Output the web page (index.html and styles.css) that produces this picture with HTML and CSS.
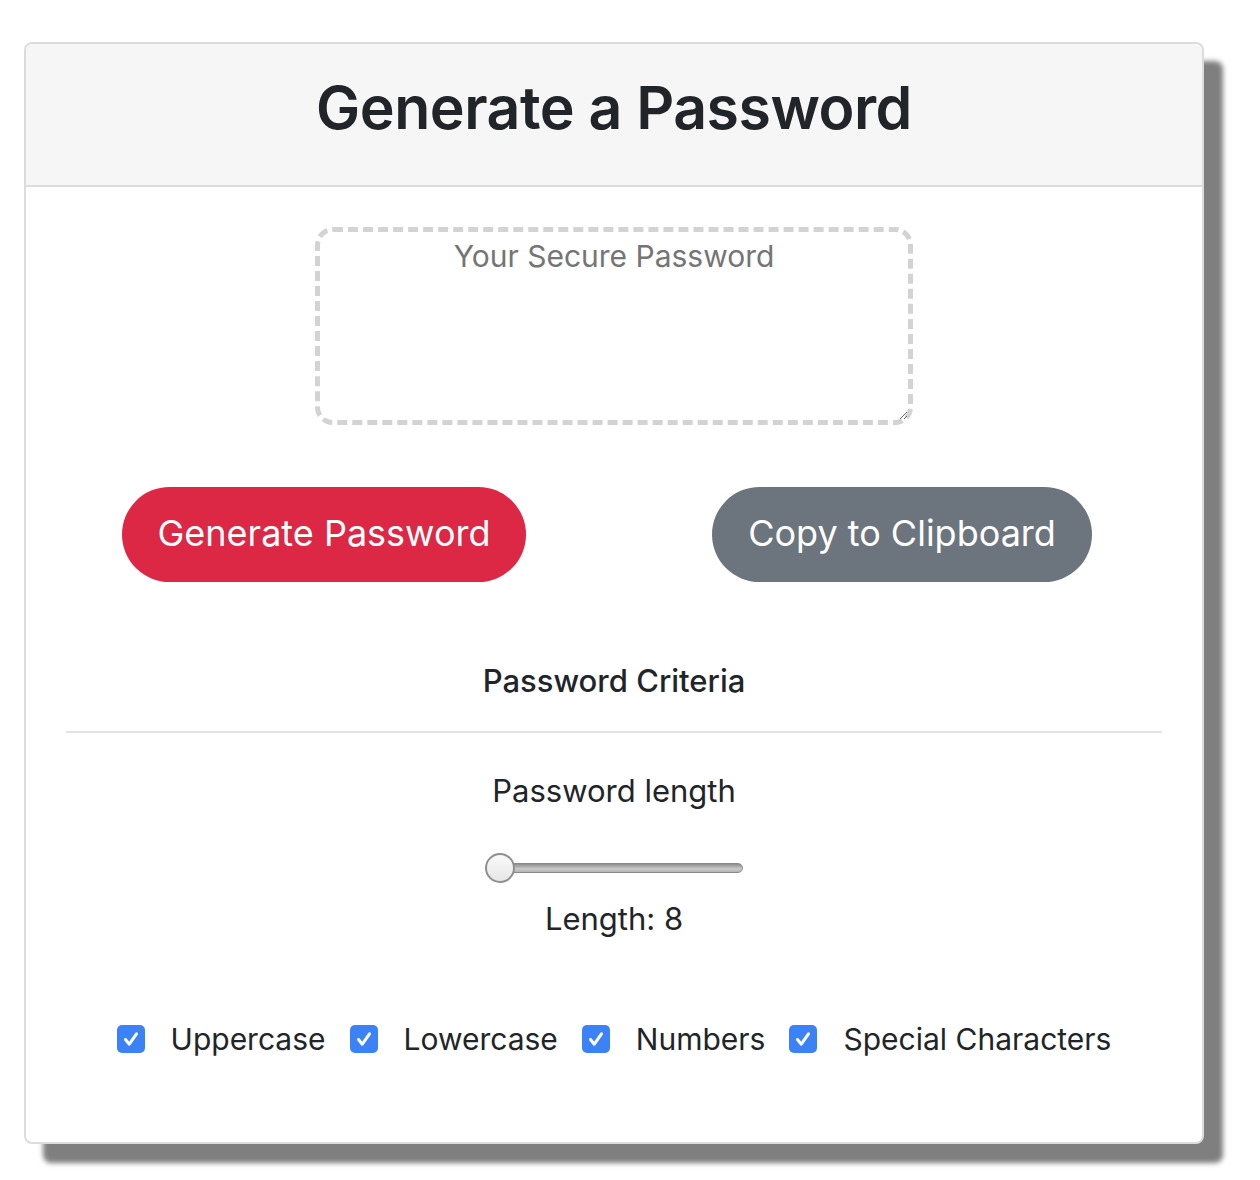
FILE: index.html
```html
<!DOCTYPE html>
<html lang="en">
<head>
<meta charset="utf-8">
<title>Password Generator</title>
<link rel="stylesheet" href="styles.css">
</head>
<body>
<div class="wrapper">
  <div class="card">
    <div class="card-header">
      <h2 class="title">Generate a Password</h2>
    </div>
    <div class="card-body">
      <textarea class="password" readonly placeholder="Your Secure Password" aria-label="Generated Password"></textarea>
      <div class="actions">
        <button class="btn btn-red">Generate Password</button>
        <button class="btn btn-gray">Copy to Clipboard</button>
      </div>
      <h3 class="criteria">Password Criteria</h3>
      <hr class="divider">
      <p class="label">Password length</p>
      <div class="slider">
        <div class="track"></div>
        <div class="thumb"></div>
      </div>
      <p class="length">Length: 8</p>
      <div class="checks">
        <label class="check"><span class="box"><svg viewBox="0 0 28 28" width="28" height="28"><path d="M8.5 14.5 L12.3 19.2 L19.5 8.8" fill="none" stroke="#fff" stroke-width="3" stroke-linecap="round" stroke-linejoin="round"/></svg></span>Uppercase</label>
        <label class="check"><span class="box"><svg viewBox="0 0 28 28" width="28" height="28"><path d="M8.5 14.5 L12.3 19.2 L19.5 8.8" fill="none" stroke="#fff" stroke-width="3" stroke-linecap="round" stroke-linejoin="round"/></svg></span>Lowercase</label>
        <label class="check"><span class="box"><svg viewBox="0 0 28 28" width="28" height="28"><path d="M8.5 14.5 L12.3 19.2 L19.5 8.8" fill="none" stroke="#fff" stroke-width="3" stroke-linecap="round" stroke-linejoin="round"/></svg></span>Numbers</label>
        <label class="check"><span class="box"><svg viewBox="0 0 28 28" width="28" height="28"><path d="M8.5 14.5 L12.3 19.2 L19.5 8.8" fill="none" stroke="#fff" stroke-width="3" stroke-linecap="round" stroke-linejoin="round"/></svg></span>Special Characters</label>
      </div>
    </div>
  </div>
</div>
</body>
</html>
```

FILE: styles.css
```css
* { box-sizing: border-box; }
html, body { margin: 0; padding: 0; background: #fff; }
body {
  font-family: Inter, "Noto Sans", Roboto, sans-serif;
  color: #212529;
}
.wrapper { padding: 42px 0 38px 24px; }
.card {
  width: 1180px;
  height: 1102px;
  border: 2px solid #dcdcdc;
  border-radius: 8px;
  background: #fff;
  box-shadow: 19px 19px 5px rgba(0,0,0,0.5);
  overflow: hidden;
}
.card-header {
  height: 143px;
  background: #f6f6f6;
  border-bottom: 2px solid #dcdcdc;
  display: flex;
  align-items: center;
  justify-content: center;
  padding-bottom: 14px;
}
.title {
  margin: 0;
  font-size: 59px;
  font-weight: 600;
  letter-spacing: -0.5px;
  color: #212529;
}
.card-body {
  padding: 40px 40px 0;
  display: flex;
  flex-direction: column;
  align-items: center;
}
.password {
  width: 598px;
  height: 198px;
  border: 5px dashed #d3d3d3;
  border-radius: 18px;
  resize: both;
  font-family: inherit;
  font-size: 30px;
  text-align: center;
  padding: 6px 8px;
  outline: none;
}
.password::placeholder { color: #757575; }
.actions {
  align-self: stretch;
  display: flex;
  justify-content: space-between;
  padding: 0 70px 0 56px;
  margin-top: 62px;
}
.btn {
  height: 95px;
  border: none;
  border-radius: 48px;
  color: #fff;
  font-family: inherit;
  font-size: 36px;
  font-weight: 400;
  padding: 0 0 4px;
}
.btn-red { background: #dc2745; width: 404px; }
.btn-gray { background: #6c757d; width: 380px; }
.criteria {
  margin: 79px 0 0;
  font-size: 31px;
  font-weight: 500;
  line-height: 40px;
}
.divider {
  align-self: stretch;
  border: none;
  border-top: 2px solid #e4e4e4;
  margin: 30px 0 0;
}
.label {
  margin: 38px 0 0;
  font-size: 31px;
  line-height: 40px;
}
.slider {
  position: relative;
  width: 258px;
  height: 30px;
  margin-top: 42px;
}
.track {
  position: absolute;
  left: 2px; right: 0;
  top: 10px;
  height: 10px;
  border-radius: 5px;
  background: linear-gradient(#8e8e8e, #c9c9c9 60%, #b5b5b5);
  border: 1px solid #8a8a8a;
}
.thumb {
  position: absolute;
  left: 0; top: 0;
  width: 30px; height: 30px;
  border-radius: 50%;
  background: linear-gradient(#fafafa, #e6e6e6);
  border: 2px solid #8f8f8f;
}
.length {
  margin: 16px 0 0;
  font-size: 31px;
  line-height: 40px;
}
.checks {
  display: flex;
  align-items: center;
  gap: 24px;
  margin-top: 82px;
  font-size: 30px;
}
.check {
  display: flex;
  align-items: center;
  gap: 26px;
}
.box {
  width: 28px; height: 28px;
  border-radius: 5px;
  background: #3b82f6;
  display: inline-flex;
}
p { margin: 0; }
```
